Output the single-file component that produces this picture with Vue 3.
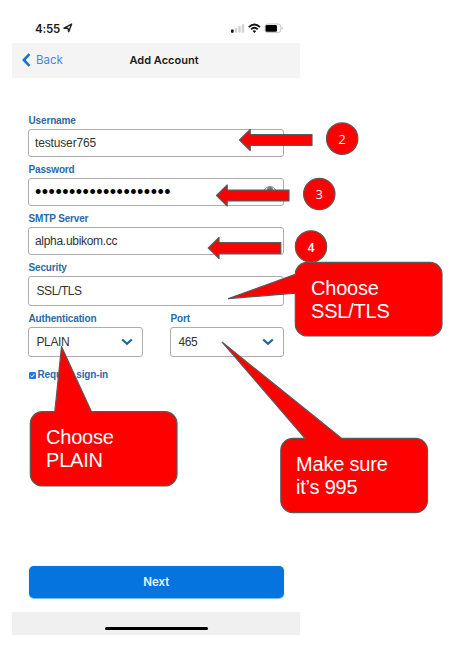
<script setup>
const callouts = [
  {
    path: 'M307.3 262.3H430a12 12 0 0 1 12 12V324a12 12 0 0 1-12 12H307.3a12 12 0 0 1-12-12V293.2L228.5 298.6L295.3 274.3a12 12 0 0 1 12-12Z',
    x: 311, y: 295, lines: ['Choose', 'SSL/TLS'],
  },
  {
    path: 'M42.3 411.7H54.8L61.5 346.5L91.5 411.7H165a12 12 0 0 1 12 12V474a12 12 0 0 1-12 12H42.3a12 12 0 0 1-12-12V423.7a12 12 0 0 1 12-12Z',
    x: 46, y: 444, lines: ['Choose', 'PLAIN'],
  },
  {
    path: 'M292.8 438.3H305L222.3 342.3L341.5 438.3H415.5a12 12 0 0 1 12 12V500.6a12 12 0 0 1-12 12H292.8a12 12 0 0 1-12-12V450.3a12 12 0 0 1 12-12Z',
    x: 296, y: 471, lines: ['Make sure', 'it’s 995'],
  },
]
const arrows = [
  { x: 239.5, y: 140 },
  { x: 216.5, y: 195.5 },
  { x: 208.3, y: 248 },
]
const steps = [
  { n: 2, x: 342.2, y: 138.6, cls: 'step' },
  { n: 3, x: 319.3, y: 194, cls: 'step' },
  { n: 4, x: 311, y: 246.5, cls: 'step alt' },
]
</script>

<template>
  <main class="page">
    <section class="phone">
      <div class="status">
        <span class="time">4:55</span>
        <svg class="loc" width="10" height="10" viewBox="0 0 10 10"><path d="M1 5.2L8.6 1.1L5.7 8.7L4.9 5.3Z" /></svg>
        <svg class="signals" width="53" height="11" viewBox="0 0 53 11">
          <rect x="0" y="6.5" width="2.6" height="3.2" rx=".7" fill="#111" />
          <g fill="#d2d2d2">
            <rect x="3.8" y="4.9" width="2.4" height="4.8" rx=".7" />
            <rect x="7.3" y="3" width="2.4" height="6.7" rx=".7" />
            <rect x="10.8" y="1.2" width="2.4" height="8.5" rx=".7" />
          </g>
          <g fill="none" stroke="#111" stroke-width="1.9">
            <path d="M17.8 4.1Q23.4-.9 29 4.1" />
            <path d="M20.1 6.4Q23.4 3.3 26.7 6.4" />
          </g>
          <path d="M21.6 8Q23.4 6.5 25.2 8L23.4 10Z" fill="#111" />
          <rect x="34" y="1" width="15.8" height="8.6" rx="2.6" fill="#fff" stroke="#b5b5b5" stroke-width=".8" />
          <rect x="34.6" y="1.9" width="11.4" height="6.9" rx="1.4" />
          <path d="M50.9 3.8Q52.5 5.3 50.9 6.8Z" fill="#aaa" />
        </svg>
      </div>

      <header class="nav">
        <svg width="9" height="14" viewBox="0 0 9 14"><path d="M7.5 1.2L1.8 7L7.5 12.8" /></svg>
        <span class="back">Back</span>
        <h1>Add Account</h1>
      </header>

      <form class="form">
        <label>Username</label>
        <div class="box">testuser765</div>
        <label>Password</label>
        <div class="box secret">
          <span class="dots">••••••••••••••••••••</span>
          <svg width="14" height="10" viewBox="0 0 14 10"><path d="M1 5Q7-2.2 13 5Q7 11 1 5Z" /><circle cx="7" cy="4.4" r="2.6" fill="#777" /></svg>
        </div>
        <label>SMTP Server</label>
        <div class="box domain">alpha.ubikom.cc</div>
        <label>Security</label>
        <div class="box tall">SSL/TLS</div>
        <div class="pair">
          <div>
            <label>Authentication</label>
            <div class="box tall">PLAIN<svg width="12" height="8" viewBox="0 0 12 8"><path d="M1.2 1.5L6 5.8L10.8 1.5" /></svg></div>
          </div>
          <div>
            <label>Port</label>
            <div class="box tall">465<svg width="12" height="8" viewBox="0 0 12 8"><path d="M1.2 1.5L6 5.8L10.8 1.5" /></svg></div>
          </div>
        </div>
        <div class="signin">
          <svg width="7" height="7" viewBox="0 0 7 7"><rect width="7" height="7" rx="1.3" /><path d="M1.6 3.6L3 5L5.4 1.9" /></svg>
          <span>Require sign-in</span>
        </div>
      </form>

      <div class="next">Next</div>
      <footer><i></i></footer>
    </section>

    <svg class="notes" width="450" height="648" viewBox="0 0 450 648">
      <g class="shape">
        <path v-for="a in arrows" :key="a.y" :transform="`translate(${a.x} ${a.y})`" d="M0 0L10.7-10.5V-5.4H72.5V5.4H10.7V10.5Z" />
        <circle v-for="s in steps" :key="s.n" :cx="s.x" :cy="s.y" r="15.7" />
        <path v-for="c in callouts" :key="c.y" :d="c.path" />
      </g>
      <text v-for="s in steps" :key="s.n" :class="s.cls" :x="s.x" :y="s.y + 5">{{ s.n }}</text>
      <g v-for="c in callouts" :key="c.y" class="say">
        <text v-for="(l, i) in c.lines" :key="l" :x="c.x" :y="c.y + i * 23">{{ l }}</text>
      </g>
    </svg>
  </main>
</template>

<style>
body { background: #fff; }
</style>

<style scoped>
.page { position: relative; width: 450px; height: 648px; overflow: hidden; font-family: Inter, "Liberation Sans", sans-serif; }
.phone { width: 288px; margin-left: 12px; height: 635px; display: flex; flex-direction: column; }
.status { height: 42.5px; box-sizing: border-box; padding: 22px 16px 0 23px; display: flex; align-items: flex-start; color: #1a1a1a; }
.time { font-size: 11.5px; line-height: 14px; font-weight: 600; letter-spacing: -.2px; width: 25px; margin-right: 3px; white-space: nowrap; }
.loc { margin-top: 1px; fill: none; stroke: #222; stroke-width: 1.4; stroke-linejoin: round; }
.signals { margin: 1px 0 0 auto; }
.nav { height: 35.5px; background: #f4f4f4; display: flex; align-items: center; padding-left: 10px; }
.nav svg { fill: none; stroke: #1a6fd6; stroke-width: 2.5; }
.back { font-size: 11.5px; color: #4688dc; margin-left: 5px; width: 26px; }
h1 { margin: 0 0 0 67.5px; font-size: 11px; font-weight: 600; color: #1c1c1c; white-space: nowrap; }
.form { padding: 36px 16px 0; height: 488px; box-sizing: border-box; }
label { display: block; height: 15px; font: bold 10px/13px "Liberation Sans", Arial, sans-serif; letter-spacing: -.15px; color: #2c69a8; padding-left: .5px; }
.box { box-sizing: border-box; height: 28px; border: 1px solid #adadad; border-radius: 3px; margin-bottom: 6px; padding: 0 6px; display: flex; align-items: center; justify-content: space-between; font: 12px "Liberation Sans", Arial, sans-serif; letter-spacing: -.15px; color: #333; background: #fff; }
.domain { letter-spacing: -.3px; }
.tall { height: 30px; padding: 0 9px 0 7.5px; letter-spacing: -.4px; }
.box svg { fill: none; stroke: #1e62a8; stroke-width: 2.3; }
.secret svg { stroke: #888; stroke-width: 1; margin-top: -4px; }
.dots { font: 18px/26px "Liberation Sans", sans-serif; letter-spacing: .5px; color: #000; }
.pair { display: grid; grid-template-columns: 114.5px 114px; justify-content: space-between; }
.signin { display: flex; align-items: center; gap: 2px; margin-top: 4.5px; height: 13px; font: bold 10px/13px "Liberation Sans", Arial, sans-serif; letter-spacing: -.15px; color: #2c69a8; }
.signin svg { margin: 2px 0 0 .5px; fill: #147df5; }
.signin path { fill: none; stroke: #fff; stroke-width: 1; }
.next { margin-left: 17px; width: 254.5px; height: 32px; box-sizing: border-box; border-radius: 5px; background: #0574de; color: #e8f3ff; font-size: 11.5px; font-weight: 600; display: flex; align-items: center; justify-content: center; box-shadow: 0 .5px 1px #75b5f3; }
footer { margin-top: 13.5px; height: 23.5px; background: #f0f0f0; display: flex; justify-content: center; }
footer i { display: block; width: 103px; height: 3.5px; border-radius: 2px; background: #000; margin-top: 15px; }
.notes { position: absolute; left: 0; top: 0; }
.shape { fill: #f00; stroke: #595959; stroke-width: 1.2; stroke-linejoin: round; }
.notes text { fill: #fff; }
.step { font: 12.5px "Open Sans", sans-serif; text-anchor: middle; }
.alt { font: 500 12.5px Roboto, sans-serif; }
.say { font: 20px "Liberation Sans", Arial, sans-serif; letter-spacing: -.2px; }
</style>
